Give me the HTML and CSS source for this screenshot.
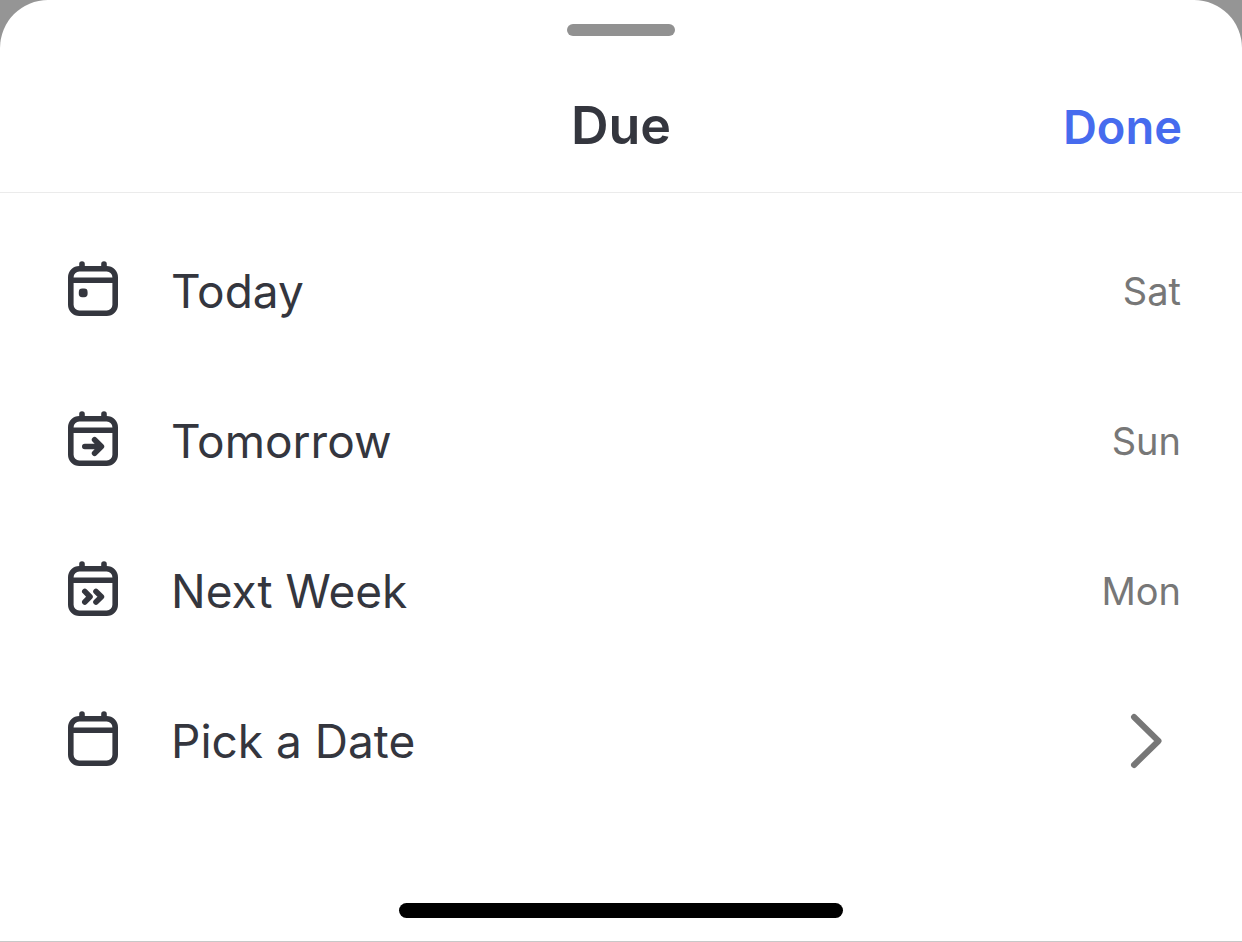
FILE: index.html
```html
<!DOCTYPE html>
<html lang="en">
<head>
<meta charset="utf-8">
<meta name="viewport" content="width=device-width, initial-scale=1">
<title>Due</title>
<link rel="stylesheet" href="styles.css">
</head>
<body>
<svg class="defs" aria-hidden="true">
  <symbol id="calendar" viewBox="0 0 60 60">
    <rect x="7.8" y="8.7" width="44.4" height="44.6" rx="8.5"/>
    <path d="M9.5 20.2H50.5M19 4V8M41 4V8"/>
  </symbol>
</svg>
<main class="sheet">
  <div class="grabber"></div>
  <header class="header">
    <h1 class="title">Due</h1>
    <button class="done" type="button">Done</button>
  </header>
  <div class="list">
    <button class="row" type="button">
      <svg class="icon" viewBox="0 1 60 60" aria-hidden="true"><use href="#calendar" width="60" height="60"/><rect class="dot" x="15.8" y="28.6" width="8.8" height="8.6" rx="3.4"/></svg>
      <span class="label">Today</span>
      <span class="day">Sat</span>
    </button>
    <button class="row" type="button">
      <svg class="icon" viewBox="0 1 60 60" aria-hidden="true"><use href="#calendar" width="60" height="60"/><path d="M21.8 36.5H38M31.6 29.8L38.4 36.5L31.6 43.2"/></svg>
      <span class="label">Tomorrow</span>
      <span class="day">Sun</span>
    </button>
    <button class="row" type="button">
      <svg class="icon" viewBox="0 1 60 60" aria-hidden="true"><use href="#calendar" width="60" height="60"/><path d="M21.8 31.4L27 36.7L21.8 42M33 31.4L38.4 36.7L33 42"/></svg>
      <span class="label">Next Week</span>
      <span class="day">Mon</span>
    </button>
    <button class="row" type="button">
      <svg class="icon" viewBox="0 1 60 60" aria-hidden="true"><use href="#calendar" width="60" height="60"/></svg>
      <span class="label">Pick a Date</span>
      <svg class="chevron" viewBox="0 0 32 56" aria-hidden="true"><path d="M4 4L28.5 28L4 52"/></svg>
    </button>
  </div>
  <div class="home"></div>
</main>
</body>
</html>
```
FILE: styles.css
```css
* {
  box-sizing: border-box;
}

body {
  margin: 0;
  background: #959595;
  color: #34363e;
  font-family: Inter, "Liberation Sans", sans-serif;
}

button {
  border: 0;
  padding: 0;
  background: none;
  color: inherit;
  font: inherit;
  cursor: pointer;
}

.defs {
  position: absolute;
  width: 0;
  height: 0;
}

.sheet {
  display: flex;
  flex-direction: column;
  min-height: 100vh;
  padding: 24px 0 23px;
  border-bottom: 1px solid #c8c8c8;
  border-radius: 48px 48px 0 0;
  background: #fff;
}

.grabber {
  align-self: center;
  width: 108px;
  height: 12px;
  border-radius: 6px;
  background: #919191;
}

.header {
  display: grid;
  grid-template-columns: 1fr auto 1fr;
  align-items: baseline;
  padding: 56px 60px 32px;
  border-bottom: 1px solid #ebebeb;
}

.title {
  grid-column: 2;
  margin: 0;
  font-size: 52px;
  line-height: 68px;
  font-weight: 600;
}

.done {
  justify-self: end;
  color: #466bee;
  font-size: 47px;
  line-height: 60px;
  font-weight: 600;
}

.list {
  display: flex;
  flex-direction: column;
  padding-top: 23px;
}

.row {
  display: flex;
  align-items: center;
  height: 150px;
  padding: 0 61px 0 63px;
  text-align: left;
}

.icon {
  width: 60px;
  height: 60px;
  margin-right: 48px;
  fill: none;
  stroke: #34363e;
  stroke-width: 5.6;
  stroke-linecap: round;
  stroke-linejoin: round;
}

.dot {
  fill: #34363e;
  stroke: none;
}

.label {
  flex: 1;
  font-size: 46px;
  line-height: 60px;
}

.day {
  color: #777;
  font-size: 38px;
  line-height: 48px;
}

.chevron {
  width: 32px;
  height: 56px;
  margin-right: 19px;
  fill: none;
  stroke: #777;
  stroke-width: 6;
  stroke-linecap: round;
  stroke-linejoin: round;
}

.home {
  align-self: center;
  width: 444px;
  max-width: 60%;
  height: 15px;
  margin-top: auto;
  border-radius: 8px;
  background: #000;
}
```
